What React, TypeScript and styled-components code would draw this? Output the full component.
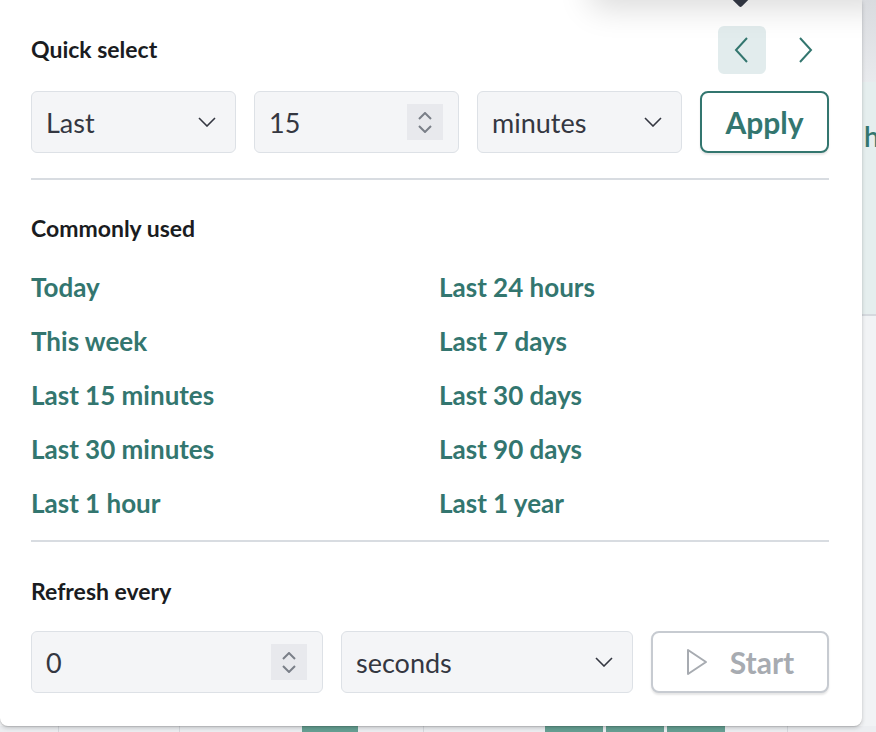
import styled, { createGlobalStyle } from 'styled-components';

const GlobalStyle = createGlobalStyle`
  html, body {
    margin: 0;
    padding: 0;
    background: #eef0f3;
  }
  body {
    font-family: Lato, "Liberation Sans", sans-serif;
  }
`;

const teal = '#33766f';
const ink = '#1a1c21';
const fieldText = '#343741';

const Page = styled.div`
  position: relative;
  width: 876px;
  height: 732px;
  overflow: hidden;
  background: #eef0f3;
`;

/* the app underneath the popover: only the right strip and the chart bottom peek out */
const Backdrop = styled.div`
  display: flex;
  flex-direction: column;
  height: 100%;
`;

const BackdropUpper = styled.div`
  flex: 1;
  display: flex;
`;

const BackdropMain = styled.div`
  flex: 1;
  background: #f5f6f8;
`;

const Side = styled.div`
  width: 14px;
  display: flex;
  flex-direction: column;
`;

const SideShade = styled.div`
  height: 82px;
  background: linear-gradient(#d9dbdf, #e8eaed);
`;

const SideTeal = styled.div`
  height: 234px;
  box-sizing: border-box;
  padding: 38px 0 0 2px;
  background: #e5eeee;
  border-bottom: 2px solid #d5d9de;
  overflow: hidden;
  font-size: 28px;
  line-height: 32px;
  font-weight: 600;
  color: ${teal};
  white-space: nowrap;
`;

const SideRest = styled.div`
  flex: 1;
  background: #f1f3f5;
`;

const ChartStrip = styled.svg`
  display: block;
  width: 876px;
  height: 6px;
`;

const Popover = styled.div`
  position: absolute;
  top: 0;
  left: 0;
  width: 862px;
  box-sizing: border-box;
  padding: 25px 33px 33px 31px;
  background: #ffffff;
  border-radius: 0 0 8px 8px;
  box-shadow: 0 2px 4px rgba(0, 0, 0, 0.18), 0 1px 1px rgba(0, 0, 0, 0.12);
  overflow: hidden;
`;

/* the date picker bar above casts its shadow onto the top of the popover */
const AnchorShadow = styled.div`
  position: absolute;
  top: -40px;
  left: 590px;
  width: 300px;
  height: 40px;
  border-radius: 0 0 0 10px;
  background: #d6d8dc;
  box-shadow: 0 8px 32px rgba(0, 0, 0, 0.15);
`;

const Arrow = styled.div`
  position: absolute;
  top: -8px;
  left: 734px;
  width: 13px;
  height: 13px;
  border-radius: 2px;
  background: #2f3440;
  transform: rotate(45deg);
`;

const HeaderRow = styled.div`
  display: flex;
  align-items: center;
  justify-content: space-between;
  height: 48px;
`;

const SectionTitle = styled.h2<{ $top?: number }>`
  margin: ${(p) => p.$top ?? 0}px 0 0;
  font-size: 23px;
  line-height: 32px;
  font-weight: 700;
  color: ${ink};
`;

const NavGroup = styled.div`
  display: flex;
  gap: 15px;
  margin-top: 2px;
`;

const NavButton = styled.button<{ $active?: boolean }>`
  width: 48px;
  height: 48px;
  padding: 0;
  border: none;
  border-radius: 6px;
  background: ${(p) => (p.$active ? '#e2eced' : 'transparent')};
  display: flex;
  align-items: center;
  justify-content: center;
  cursor: pointer;
`;

const FieldRow = styled.div<{ $cols: string; $top: number }>`
  display: grid;
  grid-template-columns: ${(p) => p.$cols};
  gap: 18px;
  margin-top: ${(p) => p.$top}px;
  height: 62px;
`;

const Field = styled.div`
  box-sizing: border-box;
  display: flex;
  align-items: center;
  justify-content: space-between;
  padding: 0 15px 0 14px;
  background: #f4f5f7;
  border: 1px solid #dde1e6;
  border-radius: 6px;
  font-size: 27px;
  color: ${fieldText};
`;

const SelectChevron = styled.svg`
  width: 18px;
  height: 10px;
  margin-right: 4px;
`;

const Stepper = styled.div`
  width: 36px;
  height: 36px;
  background: #e8e9ed;
  display: flex;
  flex-direction: column;
  align-items: center;
  justify-content: center;
  gap: 5px;
`;

const OutlineButton = styled.button<{ $disabled?: boolean }>`
  box-sizing: border-box;
  display: flex;
  align-items: center;
  justify-content: center;
  gap: 22px;
  padding: 0;
  border-radius: 8px;
  border: 2px solid ${(p) => (p.$disabled ? '#c7cbd1' : teal)};
  background: #ffffff;
  box-shadow: 0 2px 2px rgba(0, 0, 0, 0.1);
  font-family: inherit;
  font-size: 30px;
  font-weight: 700;
  color: ${(p) => (p.$disabled ? '#a7abb1' : teal)};
`;

const Divider = styled.hr<{ $top: number }>`
  margin: ${(p) => p.$top}px 0 0;
  border: none;
  height: 2px;
  background: #d8dce1;
`;

const LinkGrid = styled.div`
  display: grid;
  grid-template-columns: 408px 1fr;
  row-gap: 14px;
  margin-top: 23px;
`;

const QuickLink = styled.a`
  font-size: 26px;
  line-height: 40px;
  font-weight: 700;
  color: ${teal};
  text-decoration: none;
  cursor: pointer;
`;

const Chevron = ({ dir }: { dir: 'left' | 'right' }) => (
  <svg width="16" height="26" viewBox="0 0 16 26">
    <polyline
      points={dir === 'left' ? '13,1 2,13 13,25' : '3,1 14,13 3,25'}
      fill="none"
      stroke={teal}
      strokeWidth="2"
    />
  </svg>
);

const DownChevron = () => (
  <SelectChevron viewBox="0 0 18 10">
    <polyline points="1,1 9,9 17,1" fill="none" stroke="#343741" strokeWidth="1.6" />
  </SelectChevron>
);

const StepIcon = ({ up }: { up?: boolean }) => (
  <svg width="14" height="8" viewBox="0 0 14 8">
    <polyline
      points={up ? '1,7 7,1 13,7' : '1,1 7,7 13,1'}
      fill="none"
      stroke="#7a7f88"
      strokeWidth="2"
    />
  </svg>
);

const PlayIcon = () => (
  <svg width="22" height="28" viewBox="0 0 22 28">
    <path d="M2 2 L20 14 L2 26 Z" fill="none" stroke="#a7abb1" strokeWidth="2" strokeLinejoin="round" />
  </svg>
);

const commonlyUsed = [
  ['Today', 'Last 24 hours'],
  ['This week', 'Last 7 days'],
  ['Last 15 minutes', 'Last 30 days'],
  ['Last 30 minutes', 'Last 90 days'],
  ['Last 1 hour', 'Last 1 year'],
];

const gridLines = [58, 179, 423, 787];
const bars: [number, number][] = [
  [302, 358],
  [545, 603],
  [606, 664],
  [667, 725],
];

export default function App() {
  return (
    <Page>
      <GlobalStyle />
      <Backdrop>
        <BackdropUpper>
          <BackdropMain />
          <Side>
            <SideShade />
            <SideTeal>h</SideTeal>
            <SideRest />
          </Side>
        </BackdropUpper>
        <ChartStrip viewBox="0 0 876 6">
          <rect x="0" y="0" width="876" height="6" fill="#eceef1" />
          {gridLines.map((x) => (
            <rect key={x} x={x} y="0" width="1" height="6" fill="#d6d9de" />
          ))}
          {bars.map(([a, b]) => (
            <rect key={a} x={a} y="0" width={b - a} height="6" fill="#66a093" />
          ))}
        </ChartStrip>
      </Backdrop>

      <Popover>
        <AnchorShadow />
        <Arrow />
        <HeaderRow>
          <SectionTitle>Quick select</SectionTitle>
          <NavGroup>
            <NavButton $active aria-label="Previous">
              <Chevron dir="left" />
            </NavButton>
            <NavButton aria-label="Next">
              <Chevron dir="right" />
            </NavButton>
          </NavGroup>
        </HeaderRow>

        <FieldRow $cols="1fr 1fr 1fr 129px" $top={18}>
          <Field>
            Last
            <DownChevron />
          </Field>
          <Field>
            15
            <Stepper>
              <StepIcon up />
              <StepIcon />
            </Stepper>
          </Field>
          <Field>
            minutes
            <DownChevron />
          </Field>
          <OutlineButton>Apply</OutlineButton>
        </FieldRow>

        <Divider $top={25} />

        <SectionTitle $top={32}>Commonly used</SectionTitle>
        <LinkGrid>
          {commonlyUsed.flat().map((label) => (
            <QuickLink key={label}>{label}</QuickLink>
          ))}
        </LinkGrid>

        <Divider $top={17} />

        <SectionTitle $top={33}>Refresh every</SectionTitle>
        <FieldRow $cols="1fr 1fr 178px" $top={24}>
          <Field>
            0
            <Stepper>
              <StepIcon up />
              <StepIcon />
            </Stepper>
          </Field>
          <Field>
            seconds
            <DownChevron />
          </Field>
          <OutlineButton $disabled>
            <PlayIcon />
            Start
          </OutlineButton>
        </FieldRow>
      </Popover>
    </Page>
  );
}
